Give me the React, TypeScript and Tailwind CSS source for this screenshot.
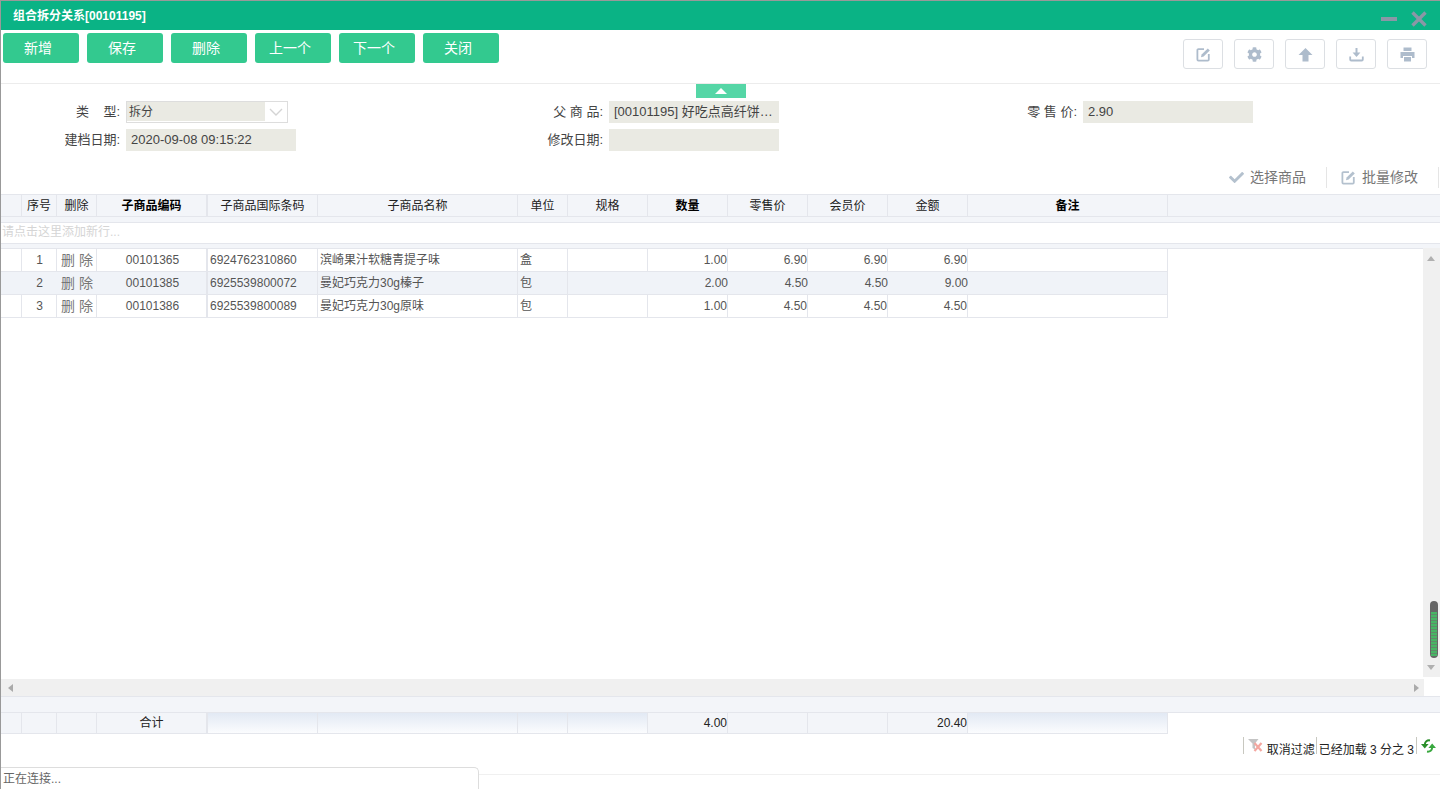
import { FaCheck, FaCog } from "react-icons/fa";

const FONT = "font-['Liberation_Sans','Noto_Sans_CJK_SC',sans-serif]";

interface Column {
  title: string;
  width: string;
  bold?: boolean;
  align?: string;
  extra?: string;
}

const columns: Column[] = [
  { title: "", width: "w-[21px]" },
  { title: "序号", width: "w-[35px]", align: "pl-px text-center" },
  { title: "删除", width: "w-[40px]", align: "pl-px text-center" },
  { title: "子商品编码", width: "w-[110px]", bold: true, align: "pl-[2px] text-center" },
  { title: "子商品国际条码", width: "w-[111px]", align: "pl-[2px]", extra: "border-l" },
  { title: "子商品名称", width: "w-[200px]", align: "pl-[2px]" },
  { title: "单位", width: "w-[50px]", align: "pl-[2px]" },
  { title: "规格", width: "w-[80px]" },
  { title: "数量", width: "w-[80px]", bold: true, align: "text-right" },
  { title: "零售价", width: "w-[80px]", align: "text-right" },
  { title: "会员价", width: "w-[80px]", align: "text-right" },
  { title: "金额", width: "w-[80px]", align: "text-right" },
  { title: "备注", width: "w-[200px]", bold: true },
];

const rows = [
  ["", "1", "删 除", "00101365", "6924762310860", "滨崎果汁软糖青提子味", "盒", "", "1.00", "6.90", "6.90", "6.90", ""],
  ["", "2", "删 除", "00101385", "6925539800072", "曼妃巧克力30g榛子", "包", "", "2.00", "4.50", "4.50", "9.00", ""],
  ["", "3", "删 除", "00101386", "6925539800089", "曼妃巧克力30g原味", "包", "", "1.00", "4.50", "4.50", "4.50", ""],
];

const footer = ["", "", "", "合计", "", "", "", "", "4.00", "", "", "20.40", ""];
const gradientCols = [4, 5, 6, 7, 12];

function EditIcon({ size = 15, color = "#aebccc" }: { size?: number; color?: string }) {
  return (
    <svg width={size} height={size} viewBox="0 0 15 15" fill="none">
      <path d="M8 2.2H2.4a1 1 0 0 0-1 1v9.4a1 1 0 0 0 1 1h9.4a1 1 0 0 0 1-1V7" stroke={color} strokeWidth="1.8" />
      <path d="M5 10.2l.6-2.6L11.8 1.4l2 2L7.6 9.600z" fill={color} />
    </svg>
  );
}

function ToolButton({ label }: { label: string }) {
  return (
    <button
      type="button"
      className="h-[30px] w-[76px] rounded-[3px] bg-[#33c98f] pr-[6px] text-center text-[14px] text-white"
    >
      {label}
    </button>
  );
}

function IconButton({ children }: { children: React.ReactNode }) {
  return (
    <div className="flex h-[30px] w-[40px] items-center justify-center rounded-[3px] border border-[#dcdfe3] text-[15px] text-[#aebccc]">
      {children}
    </div>
  );
}

function Field({ label, value }: { label: string; value: string }) {
  return (
    <div className="flex h-[22px] items-center">
      <span className="w-[125px] whitespace-pre pr-[6px] text-right text-[13px] text-[#444]">{label}</span>
      <div className="flex h-[22px] w-[170px] items-center truncate bg-[#eaeae3] pl-[5px] text-[13px] text-[#444]">
        {value}
      </div>
    </div>
  );
}

export default function App() {
  return (
    <div className={`${FONT} relative flex h-[789px] w-[1440px] flex-col overflow-hidden border-l border-t border-[#999] bg-white`}>
      {/* title bar */}
      <div className="flex h-[29px] flex-none items-center justify-between bg-[#0ab385] pl-[12px] pr-[13px]">
        <span className="text-[12px] font-bold text-white">组合拆分关系[00101195]</span>
        <div className="flex items-center gap-[14px] pt-[7px]">
          <div className="h-[4px] w-[16px] bg-[#8a97a6]" />
          <svg width="16" height="16" viewBox="0 0 16 16">
            <path d="M1.5 1.5 14.5 14.5M14.5 1.5 1.5 14.5" stroke="#8a97a6" strokeWidth="3.4" />
          </svg>
        </div>
      </div>

      {/* toolbar */}
      <div className="flex h-[54px] flex-none items-start justify-between border-b border-[#ececec] pl-[2px] pr-[13px] pt-[3px]">
        <div className="flex gap-[8px]">
          {["新增", "保存", "删除", "上一个", "下一个", "关闭"].map((b) => (
            <ToolButton key={b} label={b} />
          ))}
        </div>
        <div className="mt-[6px] flex gap-[11px]">
          <IconButton>
            <EditIcon />
          </IconButton>
          <IconButton>
            <FaCog />
          </IconButton>
          <IconButton>
            <svg width="15" height="15" viewBox="0 0 15 15">
              <path d="M7.5 1 14.5 8H10.5v6.5h-6V8H.5z" fill="#aebccc" />
            </svg>
          </IconButton>
          <IconButton>
            <svg width="15" height="15" viewBox="0 0 15 15" fill="none">
              <path d="M7.5 1v7" stroke="#aebccc" strokeWidth="2" />
              <path d="M3.6 5.6h7.800L7.500 10z" fill="#aebccc" />
              <path d="M1.200 9.500v3a1 1 0 0 0 1 1h10.600a1 1 0 0 0 1-1v-3" stroke="#aebccc" strokeWidth="1.800" />
            </svg>
          </IconButton>
          <IconButton>
            <svg width="15" height="15" viewBox="0 0 15 15">
              <path d="M3.500 0.500h8v3.500h-8z" fill="#aebccc" />
              <path d="M0.500 5h14v6h-2.500V9H3v2H.500z" fill="#aebccc" />
              <path d="M4 10h7v4.500H4z" fill="#aebccc" />
            </svg>
          </IconButton>
        </div>
      </div>

      {/* collapse handle */}
      <div className="absolute left-[695px] top-[83px] flex h-[14px] w-[50px] items-center justify-center bg-[#55d6a6]">
        <div className="h-0 w-0 border-x-[6px] border-b-[6px] border-x-transparent border-b-white" />
      </div>

      {/* form */}
      <div className="flex flex-none gap-0 pt-[17px]">
        <div className="flex w-[483px] flex-col gap-[6px]">
          <div className="flex h-[22px] items-center">
            <span className="w-[125px] whitespace-pre pr-[6px] text-right text-[13px] text-[#444]">类    型:</span>
            <div className="flex h-[22px] w-[162px] items-center border border-[#dddddd]">
              <div className="flex h-[19px] w-[138px] items-center self-start bg-[#eaeae3] pl-[2px] text-[12px] text-[#444]">
                拆分
              </div>
              <svg className="ml-[4px]" width="14" height="8" viewBox="0 0 14 8" fill="none">
                <path d="M1 1l6 6 6-6" stroke="#d4d4d4" strokeWidth="1.4" />
              </svg>
            </div>
          </div>
          <Field label="建档日期:" value="2020-09-08 09:15:22" />
        </div>
        <div className="flex w-[474px] flex-col gap-[6px]">
          <Field label="父 商 品:" value="[00101195] 好吃点高纤饼…" />
          <Field label="修改日期:" value="" />
        </div>
        <Field label="零 售 价:" value="2.90" />
      </div>

      {/* grid actions */}
      <div className="mt-[15px] flex h-[22px] flex-none items-center justify-end pr-[1px] text-[14px] text-[#777]">
        <FaCheck className="mr-[6px] text-[15px] text-[#b4c1ce]" />
        <span className="mr-[20px]">选择商品</span>
        <div className="h-[21px] w-px bg-[#e5e5e5]" />
        <span className="ml-[14px] mr-[6px]">
          <EditIcon color="#b4c1ce" />
        </span>
        <span className="mr-[20px]">批量修改</span>
        <div className="h-[21px] w-px bg-[#e5e5e5]" />
      </div>

      {/* grid header */}
      <div className="mt-[6px] flex h-[23px] flex-none border-y border-[#e4e6ec] bg-[#f3f5f9] text-[12px] text-[#222]">
        {columns.map((c, i) => (
          <div
            key={i}
            className={`${c.width} ${c.extra ?? ""} flex-none border-r border-[#e4e6ec] text-center leading-[22px] ${c.bold ? "font-bold text-black" : ""}`}
          >
            {c.title}
          </div>
        ))}
      </div>
      <div className="h-[5px] flex-none bg-[#f3f5f9]" />

      {/* add row */}
      <div className="h-[22px] flex-none border-y border-[#e4e6ec] pl-px text-[12px] leading-[19px] text-[#d5d5d5]">
        请点击这里添加新行...
      </div>
      <div className="h-[4px] flex-none bg-[#f3f5f9]" />

      {/* grid body */}
      <div className="flex min-h-0 flex-1">
        <div className="min-w-0 flex-1 border-t border-[#e4e6ec]">
          {rows.map((row, r) => (
            <div key={r} className={`flex h-[23px] w-[1167px] border-b border-[#e4e6ec] text-[12px] text-[#555] ${r === 1 ? "bg-[#f0f3f8]" : ""}`}>
              {row.map((cell, i) => (
                <div
                  key={i}
                  className={`${columns[i].width} ${columns[i].align ?? ""} ${columns[i].extra ?? ""} flex-none whitespace-nowrap border-r leading-[22px] ${r === 1 && (i < 3 || (i >= 7 && i < 12)) ? "border-transparent" : "border-[#e4e6ec]"} ${i === 2 ? "text-[14px] text-[#777]" : ""}`}
                >
                  <span className={r === 1 && i >= 8 && i < 12 ? "-mr-px inline-block" : ""}>{cell}</span>
                </div>
              ))}
            </div>
          ))}
        </div>
        {/* vertical scrollbar */}
        <div className="relative mb-[2px] w-[17px] flex-none bg-[#f0f0f0]">
          <div className="absolute left-[4px] top-[8px] h-0 w-0 border-x-[4px] border-b-[5px] border-x-transparent border-b-[#b0b0b0]" />
          <div className="absolute left-[7px] top-[353px] flex h-[57px] w-[8px] flex-col rounded-[4px] bg-[#666] px-[1px] pb-[2px] pt-[11px]">
            <div className="h-full w-full bg-[repeating-linear-gradient(to_bottom,#47b565_0,#47b565_2px,#5f8a6a_2px,#5f8a6a_3px)]" />
          </div>
          <div className="absolute bottom-[7px] left-[4px] h-0 w-0 border-x-[4px] border-t-[5px] border-x-transparent border-t-[#b0b0b0]" />
        </div>
      </div>

      {/* horizontal scrollbar */}
      <div className="flex h-[17px] flex-none">
        <div className="flex w-[1423px] items-center justify-between bg-[#f0f0f0] pl-[7px] pr-[5px]">
          <div className="h-0 w-0 border-y-[4px] border-r-[5px] border-y-transparent border-r-[#aaa]" />
          <div className="h-0 w-0 border-y-[4px] border-l-[5px] border-y-transparent border-l-[#aaa]" />
        </div>
      </div>

      {/* summary */}
      <div className="h-[17px] flex-none border-y border-[#e4e6ec] bg-[#f3f5f9]" />
      <div className="flex h-[21px] w-[1167px] flex-none border-b border-[#e4e6ec] bg-[#f3f5f9] text-[12px] leading-[21px] text-[#222]">
        {footer.map((cell, i) => (
          <div
            key={i}
            className={`${columns[i].width} ${columns[i].extra ?? ""} flex-none border-r border-[#e4e6ec] ${i >= 8 ? "text-right" : "text-center"} ${gradientCols.includes(i) ? "bg-gradient-to-b from-[#e2e9f4] to-[#fbfcfe]" : ""}`}
          >
            {cell}
          </div>
        ))}
      </div>

      {/* pager */}
      <div className="mt-[3px] flex h-[20px] flex-none items-start justify-end pr-[4px] text-[12px] leading-[26px] text-[#222]">
        <div className="h-[17px] w-px bg-[#c8c8c0]" />
        <svg className="ml-[4px] mr-[4px] mt-[2px]" width="15" height="14" viewBox="0 0 15 14">
          <path d="M0 0h10.500L7 4.500v6L4.500 9V4.500z" fill="#c4c4c4" />
          <path d="M6.500 4l7 8M13.500 4l-7 8" stroke="#f4a7a0" strokeWidth="2.200" />
        </svg>
        <span>取消过滤</span>
        <div className="ml-[1px] h-[17px] w-px bg-[#c8c8c0]" />
        <span className="ml-[2px]">已经加载 3 分之 3</span>
        <div className="ml-[2px] h-[17px] w-px bg-[#c8c8c0]" />
        <svg className="ml-[4px] mt-[2px]" width="15" height="14" viewBox="0 0 15 14" fill="none">
          <path d="M9 1.400C6 1 4 2.600 3.800 5.500" stroke="#2a8f2a" strokeWidth="2" />
          <path d="M0 5h7.600L3.800 9.500z" fill="#2a8f2a" />
          <path d="M6 12.600c3 .4 5-1.200 5.200-4.100" stroke="#39a83f" strokeWidth="2" />
          <path d="M7.400 9H15l-3.800-4.500z" fill="#39a83f" />
        </svg>
      </div>

      <div className="mt-[17px] h-px flex-none bg-[#f0f0f0]" />
      <div className="h-[14px] flex-none" />

      {/* status box */}
      <div className="absolute bottom-0 left-[-1px] h-[22px] w-[479px] rounded-tr-[5px] border-r border-t border-[#dddddd] bg-white pl-[3px] text-[12px] leading-[22px] text-[#666]">
        正在连接...
      </div>
    </div>
  );
}
